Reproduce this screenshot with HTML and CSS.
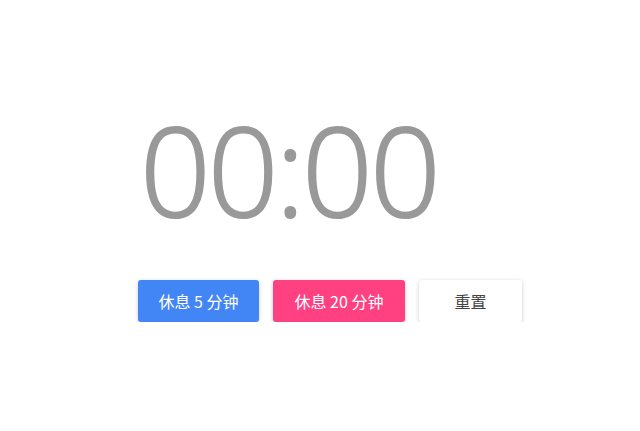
FILE: index.html
```html
<!DOCTYPE html>
<html lang="zh-CN">
<head>
    <meta charset="UTF-8">
    <meta name="viewport" content="width=device-width, initial-scale=1.0">
    <title>休息计时器</title>
    <link rel="stylesheet" href="styles.css">
</head>
<body>
    <div id="timer">
        <div class="time">00:00</div>
        <div class="controls">
            <button class="btn btn-blue">休息 5 分钟</button>
            <button class="btn btn-pink">休息 20 分钟</button>
            <button class="btn btn-white">重置</button>
        </div>
    </div>
</body>
</html>
```

FILE: styles.css
```css
body {
    margin: 0;
    background: #fff;
    font-family: "Open Sans", "Noto Sans CJK SC", sans-serif;
}
#timer {
    padding: 93px 0 0 138px;
}
.time {
    font-size: 124px;
    font-weight: 300;
    -webkit-text-stroke: 2px #999;
    line-height: 152px;
    color: #999;
    letter-spacing: -3px;
    margin-left: 2px;
}
.controls {
    display: flex;
    gap: 14px;
    margin-top: 35px;
}
.btn {
    height: 42px;
    border: none;
    border-radius: 3px;
    font-family: "Noto Sans CJK SC", sans-serif;
    font-size: 16px;
    cursor: pointer;
    box-shadow: 0 1px 4px rgba(0, 0, 0, 0.2);
}
.btn-blue {
    width: 121px;
    background-color: #4285f4;
    color: #fff;
}
.btn-pink {
    width: 132px;
    background-color: #ff4081;
    color: #fff;
}
.btn-white {
    width: 103px;
    background-color: #fff;
    color: #444;
}
```
